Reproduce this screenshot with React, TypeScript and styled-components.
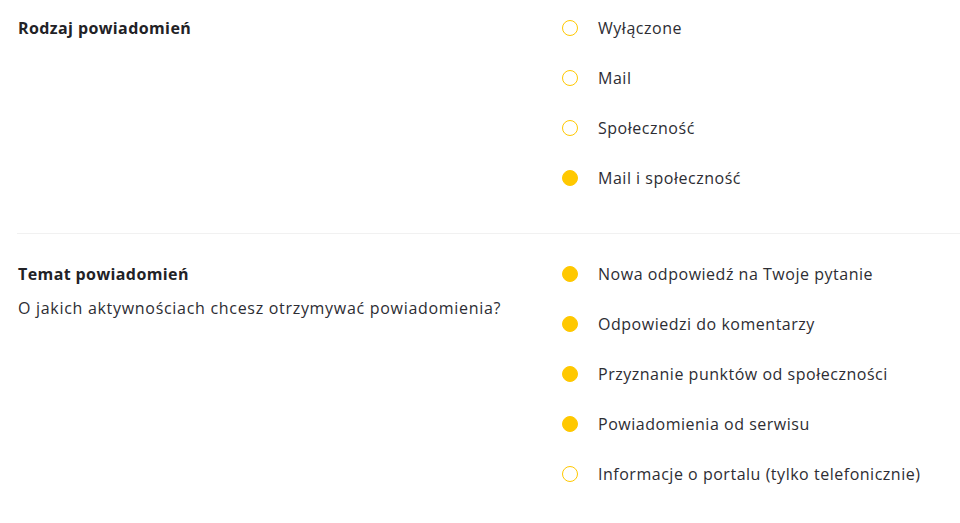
import { createGlobalStyle, styled } from 'styled-components';

const GlobalStyle = createGlobalStyle`
  body {
    margin: 0;
    background: #ffffff;
    font-family: 'Open Sans', 'Liberation Sans', sans-serif;
    color: #2d2d33;
  }
`;

type Option = { label: string; checked: boolean };

const sections: {
  title: string;
  description?: string;
  options: Option[];
}[] = [
  {
    title: 'Rodzaj powiadomień',
    options: [
      { label: 'Wyłączone', checked: false },
      { label: 'Mail', checked: false },
      { label: 'Społeczność', checked: false },
      { label: 'Mail i społeczność', checked: true },
    ],
  },
  {
    title: 'Temat powiadomień',
    description: 'O jakich aktywnościach chcesz otrzymywać powiadomienia?',
    options: [
      { label: 'Nowa odpowiedź na Twoje pytanie', checked: true },
      { label: 'Odpowiedzi do komentarzy', checked: true },
      { label: 'Przyznanie punktów od społeczności', checked: true },
      { label: 'Powiadomienia od serwisu', checked: true },
      { label: 'Informacje o portalu (tylko telefonicznie)', checked: false },
    ],
  },
];

const App = () => {
  return (
    <>
      <GlobalStyle />
      <Page>
        {sections.map((section) => (
          <Section key={section.title}>
            <Info>
              <Title>{section.title}</Title>
              {section.description && (
                <Description>{section.description}</Description>
              )}
            </Info>
            <Options>
              {section.options.map((option) => (
                <OptionRow key={option.label}>
                  <Radio $checked={option.checked} />
                  <OptionLabel>{option.label}</OptionLabel>
                </OptionRow>
              ))}
            </Options>
          </Section>
        ))}
      </Page>
    </>
  );
};

export default App;

const Page = styled.div`
  display: flex;
  flex-direction: column;

  padding-left: 17px;
`;

const Section = styled.section`
  display: grid;
  grid-template-columns: 546px 1fr;

  padding: 29px 0 44px 1px;

  border-bottom: 1px solid #f1f1f1;

  &:first-child {
    padding-top: 17px;
  }

  &:last-child {
    border-bottom: none;
  }
`;

const Info = styled.div`
  display: flex;
  flex-direction: column;
  gap: 12px;
`;

const Title = styled.h3`
  margin: 0;

  font-size: 16px;
  font-weight: 700;
  line-height: 22px;
  letter-spacing: 0.4px;
  color: #222226;
`;

const Description = styled.p`
  margin: 0;

  font-size: 16px;
  line-height: 22px;
  letter-spacing: 0.7px;
`;

const Options = styled.div`
  display: flex;
  flex-direction: column;
  gap: 28px;
  margin-left: -2px;
`;

const OptionRow = styled.label`
  display: flex;
  align-items: center;
  gap: 20px;

  height: 22px;

  cursor: pointer;
`;

const Radio = styled.span<{ $checked: boolean }>`
  width: 16px;
  height: 16px;
  border-radius: 50%;

  border: 1px solid #ffc800;
  background-color: ${({ $checked }) => ($checked ? '#ffc800' : '#ffffff')};

  box-sizing: border-box;
  flex-shrink: 0;
`;

const OptionLabel = styled.span`
  font-size: 16px;
  line-height: 22px;
  letter-spacing: 0.52px;
`;
